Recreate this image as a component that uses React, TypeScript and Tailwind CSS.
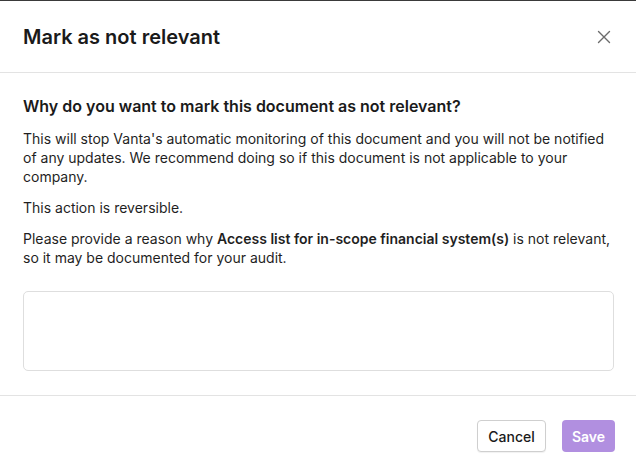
import React from "react";

export default function App() {
  return (
    <div
      className="w-[636px] h-[472px] bg-white border-t border-[#3a3a3a] flex flex-col text-[#1a1a1a]"
      style={{ fontFamily: "Inter, 'Noto Sans', sans-serif" }}
    >
      <div className="h-[72px] px-[23px] flex items-center justify-between border-b border-[#e3e3e3]">
        <h1 className="text-[20px] font-semibold text-[#1a1a1a]">Mark as not relevant</h1>
        <button className="w-[20px] h-[20px] flex items-center justify-center mr-[-1px]">
          <svg width="14" height="14" viewBox="0 0 14 14" fill="none" stroke="#6b6b6b" strokeWidth="1.4" strokeLinecap="round">
            <path d="M1.5 1.5 L12.5 12.5 M12.5 1.5 L1.5 12.5" />
          </svg>
        </button>
      </div>
      <div className="pl-[23px] pr-[22px] pt-[21px] pb-[24px] border-b border-[#e3e3e3]">
        <h2 className="text-[16px] leading-[24px] font-semibold text-[#1a1a1a]">
          Why do you want to mark this document as not relevant?
        </h2>
        <div className="text-[14px] leading-[19px] text-[#1f1f1f] mt-[11px] flex flex-col gap-[12px] pr-[1px]">
          <p>
            This will stop Vanta's automatic monitoring of this document and you will not be notified of any updates. We recommend doing so if this document is not applicable to your company.
          </p>
          <p>This action is reversible.</p>
          <p>
            Please provide a reason why <span className="font-semibold">Access list for in-scope financial system(s)</span> is not relevant, so it may be documented for your audit.
          </p>
        </div>
        <textarea className="mt-[24px] block w-full h-[80px] border border-[#dedede] rounded-[5px] resize-none outline-none" />
      </div>
      <div className="flex justify-end items-start gap-[16px] px-[21px] pt-[24px]">
        <button className="h-[32px] w-[69px] border border-[#cfcfcf] rounded-[4px] bg-white text-[14px] font-medium text-[#1a1a1a] shadow-[0_1px_1px_rgba(0,0,0,0.06)]">
          Cancel
        </button>
        <button className="h-[32px] w-[53px] rounded-[4px] bg-[#b18fe0] text-[14px] font-semibold text-white">
          Save
        </button>
      </div>
    </div>
  );
}
